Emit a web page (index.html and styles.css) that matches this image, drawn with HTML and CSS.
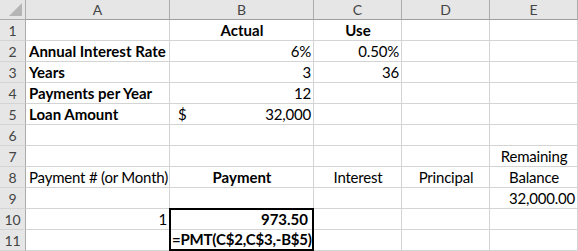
FILE: index.html
```html
<!DOCTYPE html>
<html>
<head>
<meta charset="utf-8">
<link rel="stylesheet" href="styles.css">
</head>
<body>
<div class="sheet">
  <div class="corner"><span class="tri"></span></div>
  <div class="colh">A</div>
  <div class="colh">B</div>
  <div class="colh">C</div>
  <div class="colh">D</div>
  <div class="colh last">E</div>

  <div class="rowh">1</div>
  <div class="c"></div>
  <div class="c center b">Actual</div>
  <div class="c center b">Use</div>
  <div class="c"></div>
  <div class="c"></div>

  <div class="rowh">2</div>
  <div class="c b">Annual Interest Rate</div>
  <div class="c right">6%</div>
  <div class="c right">0.50%</div>
  <div class="c"></div>
  <div class="c"></div>

  <div class="rowh">3</div>
  <div class="c b">Years</div>
  <div class="c right">3</div>
  <div class="c right">36</div>
  <div class="c"></div>
  <div class="c"></div>

  <div class="rowh">4</div>
  <div class="c b">Payments per Year</div>
  <div class="c right">12</div>
  <div class="c"></div>
  <div class="c"></div>
  <div class="c"></div>

  <div class="rowh">5</div>
  <div class="c b">Loan Amount</div>
  <div class="c acct"><span class="cur">$</span><span>32,000</span></div>
  <div class="c"></div>
  <div class="c"></div>
  <div class="c"></div>

  <div class="rowh">6</div>
  <div class="c"></div>
  <div class="c"></div>
  <div class="c"></div>
  <div class="c"></div>
  <div class="c"></div>

  <div class="rowh">7</div>
  <div class="c"></div>
  <div class="c"></div>
  <div class="c"></div>
  <div class="c"></div>
  <div class="c center">Remaining</div>

  <div class="rowh">8</div>
  <div class="c">Payment # (or Month)</div>
  <div class="c center b">Payment</div>
  <div class="c center">Interest</div>
  <div class="c center">Principal</div>
  <div class="c center">Balance</div>

  <div class="rowh">9</div>
  <div class="c"></div>
  <div class="c"></div>
  <div class="c"></div>
  <div class="c"></div>
  <div class="c right">32,000.00</div>

  <div class="rowh">10</div>
  <div class="c right">1</div>
  <div class="boxed">
    <div class="bc right b">973.50</div>
    <div class="bc b formula">=PMT(C$2,C$3,-B$5)</div>
  </div>
  <div class="c"></div>
  <div class="c"></div>
  <div class="c"></div>

  <div class="rowh">11</div>
  <div class="c"></div>
  <div class="c"></div>
  <div class="c"></div>
  <div class="c"></div>
</div>
</body>
</html>
```

FILE: styles.css
```css
html, body {
  margin: 0;
  padding: 0;
  background: #ffffff;
}

.sheet {
  display: grid;
  grid-template-columns: 25px 143px 143px 87px 87px 87px;
  grid-template-rows: 19px repeat(11, 20px);
  gap: 1px;
  background: #d4d4d4;
  width: 577px;
  padding: 0 1px 1px 0;
  font-family: "Lato", "Liberation Sans", sans-serif;
  font-size: 15px;
  color: #000;
}

.corner {
  background: #e6e6e6;
  border-right: 1px solid #ababab;
  border-bottom: 1px solid #ababab;
  margin: 0 -1px -1px 0;
  position: relative;
}

.tri {
  position: absolute;
  right: 3px;
  bottom: 3px;
  width: 0;
  height: 0;
  border-left: 13px solid transparent;
  border-bottom: 13px solid #b5b5b5;
}

.colh {
  background: #e6e6e6;
  color: #444;
  display: flex;
  align-items: center;
  justify-content: center;
  font-size: 14px;
  border-bottom: 1px solid #9e9e9e;
  border-right: 1px solid #ababab;
  margin: 0 -1px -1px 0;
}

.rowh {
  background: #e6e6e6;
  color: #444;
  display: flex;
  align-items: flex-end;
  justify-content: center;
  font-size: 14px;
  line-height: 18px;
  border-right: 1px solid #ababab;
  border-bottom: 1px solid #d4d4d4;
  margin: 0 -1px -1px 0;
}

.c, .bc {
  background: #fff;
  display: flex;
  align-items: flex-end;
  padding: 0 2px 0 3px;
  line-height: 19px;
  white-space: nowrap;
  letter-spacing: -0.2px;
}

.center { justify-content: center; }
.right { justify-content: flex-end; }
.b { font-weight: 700; letter-spacing: 0; }

.acct {
  justify-content: space-between;
  padding-left: 8px;
}

.boxed {
  grid-row: span 2;
  display: flex;
  flex-direction: column;
  gap: 1px;
  background: #d4d4d4;
  outline: 1px solid #000;
  box-shadow: inset 0 0 0 1px #000;
}

.bc {
  flex: 1;
  margin: 0 1px;
}

.bc:first-child { margin-top: 1px; padding-right: 4px; }
.bc:last-child { margin-bottom: 1px; padding-left: 1px; }

.b.formula { letter-spacing: -0.2px; }
```
